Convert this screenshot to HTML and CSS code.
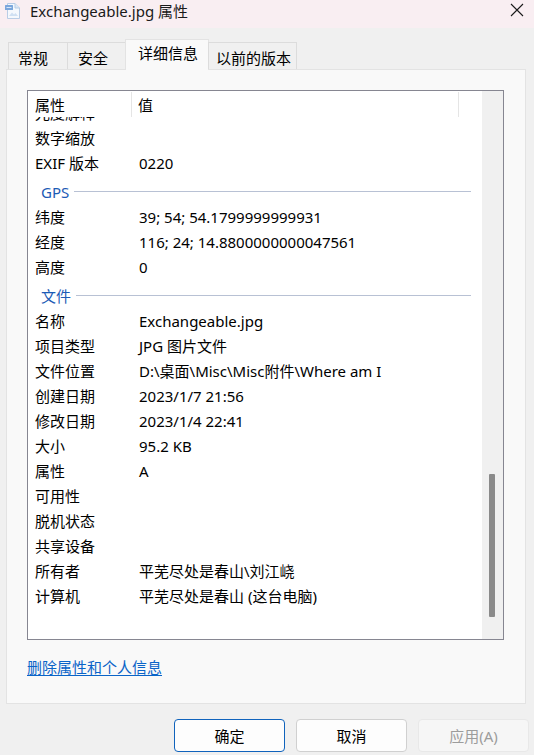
FILE: index.html
```html
<!DOCTYPE html>
<html lang="zh-CN">
<head>
<meta charset="utf-8">
<title>Exchangeable.jpg 属性</title>
<link rel="stylesheet" href="styles.css">
</head>
<body>
<div class="window">
  <div class="titlebar">
    <svg class="file-icon" width="18" height="18" viewBox="0 0 18 18">
      <path d="M3.5 1.5 H11 L15.5 6 V16.5 H3.5 Z" fill="#f4f8fd" stroke="#b9cde6" stroke-width="1"/>
      <path d="M11 1.5 V6 H15.5" fill="#dbe7f5" stroke="#b9cde6" stroke-width="1"/>
      <rect x="1" y="3" width="8" height="5" rx="0.5" fill="#7aa6dc"/>
      <rect x="2.5" y="5" width="5" height="1" fill="#d6e5f7"/>
      <path d="M5 14 L8 10.5 L10 12.5 L11.5 11 L14 14 Z" fill="#cfe0f3"/>
    </svg>
    <span class="title-text">Exchangeable.jpg 属性</span>
    <svg class="close-icon" width="14" height="14" viewBox="0 0 14 14">
      <path d="M1 1 L13 13 M13 1 L1 13" stroke="#1a1a1a" stroke-width="1.1" fill="none"/>
    </svg>
  </div>

  <div class="tabs">
    <div class="tab tab-general">常规</div>
    <div class="tab tab-security">安全</div>
    <div class="tab tab-details selected">详细信息</div>
    <div class="tab tab-versions">以前的版本</div>
  </div>

  <div class="panel">
    <div class="listbox">
      <div class="list-main">
        <div class="list-header">
          <div class="hcell hname">属性</div>
          <div class="hcell hvalue">值</div>
          <div class="hcell hrest"></div>
        </div>
        <div class="list-body">
          <div class="rows">
            <div class="row"><span class="name">光度解释</span><span class="value"></span></div>
            <div class="row"><span class="name">数字缩放</span><span class="value"></span></div>
            <div class="row"><span class="name">EXIF 版本</span><span class="value">0220</span></div>
            <div class="group"><span class="group-title">GPS</span><span class="group-line"></span></div>
            <div class="row"><span class="name">纬度</span><span class="value">39; 54; 54.1799999999931</span></div>
            <div class="row"><span class="name">经度</span><span class="value">116; 24; 14.8800000000047561</span></div>
            <div class="row"><span class="name">高度</span><span class="value">0</span></div>
            <div class="group"><span class="group-title">文件</span><span class="group-line"></span></div>
            <div class="row"><span class="name">名称</span><span class="value">Exchangeable.jpg</span></div>
            <div class="row"><span class="name">项目类型</span><span class="value">JPG 图片文件</span></div>
            <div class="row"><span class="name">文件位置</span><span class="value">D:\桌面\Misc\Misc附件\Where am I</span></div>
            <div class="row"><span class="name">创建日期</span><span class="value">2023/1/7 21:56</span></div>
            <div class="row"><span class="name">修改日期</span><span class="value">2023/1/4 22:41</span></div>
            <div class="row"><span class="name">大小</span><span class="value">95.2 KB</span></div>
            <div class="row"><span class="name">属性</span><span class="value">A</span></div>
            <div class="row"><span class="name">可用性</span><span class="value"></span></div>
            <div class="row"><span class="name">脱机状态</span><span class="value"></span></div>
            <div class="row"><span class="name">共享设备</span><span class="value"></span></div>
            <div class="row"><span class="name">所有者</span><span class="value">平芜尽处是春山\刘江峣</span></div>
            <div class="row"><span class="name">计算机</span><span class="value">平芜尽处是春山 (这台电脑)</span></div>
          </div>
        </div>
      </div>
      <div class="scrollbar">
        <div class="thumb"></div>
      </div>
    </div>
    <a class="remove-link" href="#">删除属性和个人信息</a>
  </div>

  <div class="buttons">
    <button class="btn btn-default">确定</button>
    <button class="btn">取消</button>
    <button class="btn btn-disabled">应用(A)</button>
  </div>
</div>
</body>
</html>
```

FILE: styles.css
```css
* {
  box-sizing: border-box;
}

html, body {
  margin: 0;
  padding: 0;
}

body {
  width: 534px;
  height: 755px;
  overflow: hidden;
  background: #f0f0f0;
  font-family: "Noto Sans", "Noto Sans CJK SC", sans-serif;
  font-size: 15px;
  color: #000;
}

.window {
  width: 534px;
  height: 755px;
  display: flex;
  flex-direction: column;
}

/* Title bar */
.titlebar {
  height: 28px;
  background: #f9eef2;
  display: flex;
  align-items: center;
  padding-left: 4px;
}

.file-icon {
  flex: none;
  margin-top: -6px;
}

.title-text {
  margin-left: 8px;
  line-height: 20px;
  margin-top: -7px;
  color: #1a1a1a;
}

.close-icon {
  margin-left: auto;
  margin-right: 10px;
  margin-top: -9px;
}

/* Tabs */
.tabs {
  display: flex;
  align-items: flex-end;
  padding-left: 8px;
  height: 41px;
  position: relative;
  z-index: 2;
}

.tab {
  height: 27px;
  border: 1px solid #dcdcdc;
  border-bottom: none;
  background: #f0f0f0;
  padding-top: 5px;
  line-height: 20px;
  white-space: nowrap;
  margin-right: -1px;
  color: #000;
}

.tab-general {
  width: 60px;
  padding-left: 9px;
}

.tab-security {
  width: 59px;
  padding-left: 10px;
}

.tab-details {
  width: 84px;
  padding-left: 12px;
}

.tab-versions {
  width: 89px;
  padding-left: 7px;
}

.tab.selected {
  height: 31px;
  padding-top: 3px;
  background: #f9f9f9;
  margin-bottom: -1px;
  border-color: #e3e3e3;
}

/* Panel */
.panel {
  margin-left: 6px;
  width: 520px;
  height: 635px;
  background: #f9f9f9;
  border: 1px solid #e3e3e3;
  padding: 20px 21px 0 20px;
  display: flex;
  flex-direction: column;
}

.listbox {
  height: 550px;
  border: 1px solid #868691;
  background: #fff;
  display: flex;
}

.list-main {
  flex: 1;
  display: flex;
  flex-direction: column;
  min-width: 0;
}

.list-header {
  height: 26px;
  display: flex;
  flex: none;
  background: #fff;
  padding-top: 1px;
}

.hcell {
  line-height: 26px;
  height: 25px;
  white-space: nowrap;
}

.hname {
  width: 104px;
  padding-left: 7px;
  border-right: 1px solid #e5e5e5;
}

.hvalue {
  width: 327px;
  padding-left: 6px;
  border-right: 1px solid #e5e5e5;
}

.hrest {
  flex: 1;
}

.list-body {
  flex: 1;
  overflow: hidden;
}

.rows {
  margin-top: -17px;
}

.row {
  height: 25px;
  display: flex;
  align-items: center;
  line-height: 20px;
  white-space: nowrap;
}

.name {
  width: 104px;
  padding-left: 7px;
  flex: none;
}

.value {
  padding-left: 7px;
  flex: none;
}

.group {
  height: 29px;
  display: flex;
  align-items: center;
  padding-left: 13px;
  padding-right: 11px;
  padding-top: 5px;
}

.group-title {
  color: #1c5bb5;
  line-height: 20px;
  flex: none;
}

.group-line {
  flex: 1;
  height: 1px;
  background: #b8c1d4;
  margin-left: 5px;
  margin-top: -1px;
}

.scrollbar {
  width: 21px;
  flex: none;
  background: #f0f0f0;
  padding-top: 383px;
  padding-left: 7px;
}

.thumb {
  width: 6px;
  height: 143px;
  background: #8a8a8a;
  border-radius: 1px;
}

.remove-link {
  margin-top: 17px;
  line-height: 20px;
  color: #0a64c8;
  text-decoration: underline;
  text-underline-offset: 2px;
  align-self: flex-start;
}

/* Buttons */
.buttons {
  display: flex;
  padding-left: 174px;
  margin-top: 15px;
  gap: 11px;
}

.btn {
  width: 111px;
  height: 33px;
  border: 1px solid #d0d0d0;
  border-radius: 4px;
  background: #fdfdfd;
  font-family: "Noto Sans", "Noto Sans CJK SC", sans-serif;
  font-size: 15px;
  color: #000;
  padding: 0;
  line-height: 20px;
}

.btn-default {
  border-color: #1063bc;
}

.btn-disabled {
  background: #f6f6f6;
  border-color: #e8e8e8;
  color: #9c9c9c;
}
```
